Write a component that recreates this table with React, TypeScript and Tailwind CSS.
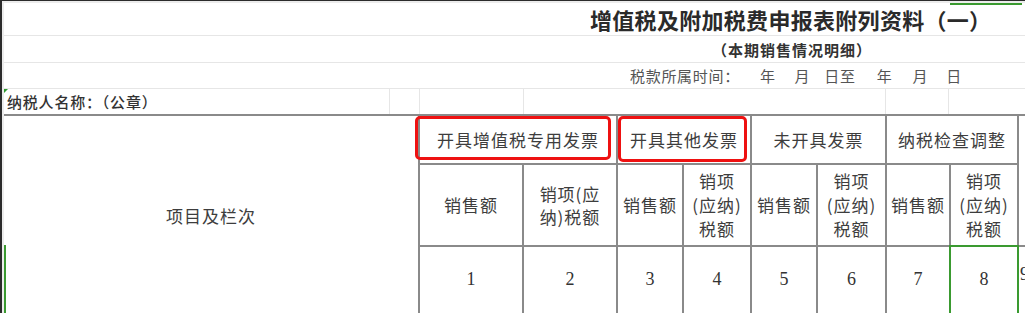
import React from "react";

const cjk = { fontFamily: "'Noto Sans CJK SC', 'Noto Sans', sans-serif" };
const serif = { fontFamily: "'Liberation Serif', 'Noto Sans CJK SC', serif" };

function HeadCell({ children, className = "" }: { children?: React.ReactNode; className?: string }) {
  return (
    <div
      className={
        "relative flex items-center justify-center border-l-2 border-t-2 border-[#8a8a8a] text-[17px] tracking-[1px] text-[#3d3d3d] text-center " +
        className
      }
      style={cjk}
    >
      {children}
    </div>
  );
}

export default function App() {
  const nums = ["1", "2", "3", "4", "5", "6", "7", "8"];
  return (
    <div className="relative w-[1025px] h-[313px] overflow-hidden bg-white border-t border-l-2 border-[#2b2b2b]">
      <div className="h-full border-t-2 border-l-2 border-[#ececec]">
        {/* Row 1: title */}
        <div className="h-[33px] border-b border-[#e6e6e6] flex items-center pl-[586px]">
          <span className="text-[22px] font-bold tracking-[0.3px] text-[#2a2a2a] leading-none" style={cjk}>
            增值税及附加税费申报表附列资料（一）
          </span>
        </div>
        {/* Row 2: subtitle */}
        <div className="h-[27px] border-b border-[#e6e6e6] flex items-center pl-[708px]">
          <span className="text-[15px] font-bold tracking-[1px] text-[#333] leading-none" style={cjk}>
            （本期销售情况明细）
          </span>
        </div>
        {/* Row 3: period */}
        <div className="h-[26px] border-b border-[#e6e6e6] flex items-center pl-[626px] text-[15px] tracking-[0.7px] text-[#555] leading-none" style={cjk}>
          <span>税款所属时间：</span>
          <span className="ml-[20px]">年</span>
          <span className="ml-[19px]">月</span>
          <span className="ml-[14px]">日至</span>
          <span className="ml-[21px]">年</span>
          <span className="ml-[20px]">月</span>
          <span className="ml-[18px]">日</span>
        </div>
        {/* Row 4: taxpayer */}
        <div className="h-[25px] flex">
          <div className="relative w-[385px] flex items-center pl-[3px]">
            <span className="absolute left-0 top-0 w-0 h-0 border-t-[4px] border-r-[4px] border-t-[#2f9a2f] border-r-transparent" />
            <span className="text-[15px] font-medium tracking-[0.8px] text-[#333] leading-none" style={cjk}>
              纳税人名称：（公章）
            </span>
          </div>
          <div className="w-[30px] border-l border-[#e6e6e6]" />
          <div className="w-[104px] border-l border-[#e6e6e6]" />
          <div className="w-[362px] border-l border-[#e6e6e6]" />
          <div className="w-[63px] border-l border-[#e6e6e6]" />
          <div className="flex-1 border-l border-[#e6e6e6]" />
        </div>
        {/* Table */}
        <div className="grid grid-cols-[414px_104px_94px_66px_68px_66px_69px_64px_68px_60px] grid-rows-[49px_82px_70px]">
          <div
            className="row-span-3 border-t-2 border-[#8a8a8a] flex items-center justify-center text-[17px] tracking-[1px] text-[#3d3d3d]"
            style={cjk}
          >
            项目及栏次
          </div>
          <HeadCell className="col-span-2">
            <span className="absolute left-[-5px] right-[5px] top-[0px] bottom-[3px] border-[3px] border-[#ee1111] rounded-[5px]" />
            开具增值税专用发票
          </HeadCell>
          <HeadCell className="col-span-2">
            <span className="absolute left-[0px] right-[3px] top-[0px] bottom-[1px] border-[3px] border-[#ee1111] rounded-[5px]" />
            开具其他发票
          </HeadCell>
          <HeadCell className="col-span-2">未开具发票</HeadCell>
          <HeadCell className="col-span-2">纳税检查调整</HeadCell>
          <HeadCell className="row-span-2" />

          <HeadCell>销售额</HeadCell>
          <HeadCell className="leading-[23px]">
            <span>
              销项(应
              <br />
              纳)税额
            </span>
          </HeadCell>
          <HeadCell>销售额</HeadCell>
          <HeadCell className="leading-[24px]">
            <span>
              销项
              <br />
              (应纳)
              <br />
              税额
            </span>
          </HeadCell>
          <HeadCell>销售额</HeadCell>
          <HeadCell className="leading-[24px]">
            <span>
              销项
              <br />
              (应纳)
              <br />
              税额
            </span>
          </HeadCell>
          <HeadCell>销售额</HeadCell>
          <HeadCell className="leading-[24px]">
            <span>
              销项
              <br />
              (应纳)
              <br />
              税额
            </span>
          </HeadCell>

          {nums.map((n) => (
            <div
              key={n}
              className="relative flex items-center justify-center border-l-2 border-t-2 border-[#8a8a8a] text-[18px] text-[#333] pb-[4px]"
              style={serif}
            >
              {n === "8" && (
                <span className="absolute left-[-2px] top-[-2px] right-[-2px] bottom-0 border-2 border-[#3a9a30]" />
              )}
              {n}
            </div>
          ))}
          <div
            className="flex items-start justify-start pl-[1px] pt-[14px] border-l-2 border-t-2 border-[#8a8a8a] text-[18px] text-[#333]"
            style={serif}
          >
            9
          </div>
        </div>
      </div>
      {/* selection indicators */}
      <div className="absolute left-[2px] top-[244px] w-[2px] h-[70px] bg-[#3a9a30]" />
      <div className="absolute left-[948px] top-[2px] w-[72px] h-[2px] bg-[#3a9a30]" />
    </div>
  );
}
